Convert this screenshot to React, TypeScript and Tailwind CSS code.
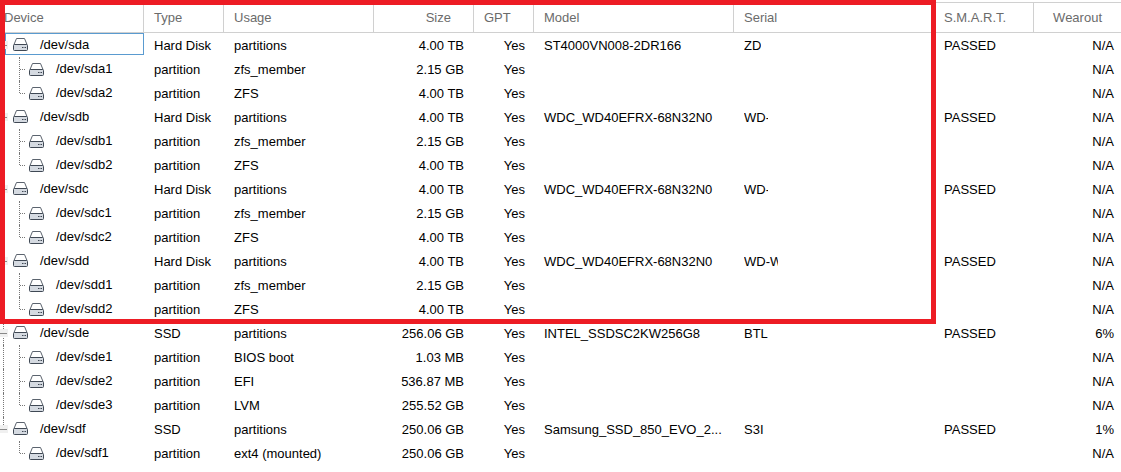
const cols = ["w-[144px]", "w-[80px]", "w-[150px]", "w-[100px]", "w-[60px]", "w-[200px]", "w-[200px]", "w-[100px]", "w-[87px]"];

type Row = { d: string; t?: string; u: string; s: string; m?: string; se?: string; clip?: string; sm?: string; w?: string; child?: boolean; last?: boolean; sel?: boolean; end?: boolean };

const disk = (d: string, t: string, s: string, m: string, se: string, clip: string, w = "N/A", sel = false, end = false): Row => ({ d, t, u: "partitions", s, m, se, clip, sm: "PASSED", w, sel, end });
const part = (d: string, u: string, s: string, last = false, end = false): Row => ({ d, t: "partition", u, s, w: "N/A", child: true, last, end });

const rows: Row[] = [
  disk("/dev/sda", "Hard Disk", "4.00 TB", "ST4000VN008-2DR166", "ZD", "w-[17px]", "N/A", true),
  part("/dev/sda1", "zfs_member", "2.15 GB"),
  part("/dev/sda2", "ZFS", "4.00 TB", true),
  disk("/dev/sdb", "Hard Disk", "4.00 TB", "WDC_WD40EFRX-68N32N0", "WD-", "w-[24px]"),
  part("/dev/sdb1", "zfs_member", "2.15 GB"),
  part("/dev/sdb2", "ZFS", "4.00 TB", true),
  disk("/dev/sdc", "Hard Disk", "4.00 TB", "WDC_WD40EFRX-68N32N0", "WD-", "w-[24px]"),
  part("/dev/sdc1", "zfs_member", "2.15 GB"),
  part("/dev/sdc2", "ZFS", "4.00 TB", true),
  disk("/dev/sdd", "Hard Disk", "4.00 TB", "WDC_WD40EFRX-68N32N0", "WD-W", "w-[34px]"),
  part("/dev/sdd1", "zfs_member", "2.15 GB"),
  part("/dev/sdd2", "ZFS", "4.00 TB", true),
  disk("/dev/sde", "SSD", "256.06 GB", "INTEL_SSDSC2KW256G8", "BTL", "w-[26px]", "6%"),
  part("/dev/sde1", "BIOS boot", "1.03 MB"),
  part("/dev/sde2", "EFI", "536.87 MB"),
  part("/dev/sde3", "LVM", "255.52 GB", true),
  disk("/dev/sdf", "SSD", "250.06 GB", "Samsung_SSD_850_EVO_2...", "S3I", "w-[20px]", "1%", false, true),
  part("/dev/sdf1", "ext4 (mounted)", "250.06 GB", true, true),
];

function Drive() {
  return (
    <svg width="15" height="13" viewBox="0 0 15 13" className="block">
      <path d="M3.5 .5h8L14 6.5H1z" fill="#fff" stroke="#5b636e" strokeWidth="1" />
      <rect x=".5" y="6.5" width="14" height="6" rx="1" fill="#d5dae1" stroke="#3f4854" strokeWidth="1" />
      <path d="M9 9.5h1.5M11.5 9.5H13" stroke="#3f4854" strokeWidth="1" />
    </svg>
  );
}

function Head({ i, label, pad }: { i: number; label: string; pad: string }) {
  return (
    <div className={`${cols[i]} shrink-0 h-full flex items-center border-r border-[#d0d0d0] last:border-r-0 ${pad}`}>
      {label}
    </div>
  );
}

function Cell({ i, children, pad }: { i: number; children?: React.ReactNode; pad: string }) {
  return <div className={`${cols[i]} shrink-0 overflow-hidden whitespace-nowrap pt-[2px] ${pad}`}>{children}</div>;
}

export default function App() {
  return (
    <div className="relative w-[1121px] h-[472px] overflow-hidden bg-white text-[13px] text-black" style={{ fontFamily: '"Liberation Sans", Arial, sans-serif' }}>
      <div className="flex h-[29px] mt-[2px] border-t border-b border-[#d0d0d0] text-[#6b6b6b] box-content">
        <Head i={0} label="Device" pad="pl-[4px]" />
        <Head i={1} label="Type" pad="pl-2.5" />
        <Head i={2} label="Usage" pad="pl-2.5" />
        <Head i={3} label="Size" pad="justify-end pr-[22px]" />
        <Head i={4} label="GPT" pad="pl-2.5" />
        <Head i={5} label="Model" pad="pl-2.5" />
        <Head i={6} label="Serial" pad="pl-2.5" />
        <Head i={7} label="S.M.A.R.T." pad="pl-2.5" />
        <Head i={8} label="Wearout" pad="justify-end pr-[19px]" />
      </div>
      {rows.map((r) => (
        <div key={r.d} className="flex h-6 items-center">
          <div className={`${cols[0]} shrink-0 relative h-full`}>
            {r.sel && <div className="absolute left-[5px] right-0 top-0 h-[22px] border border-[#5a9bd0]" />}
            {!(r.end && r.child) && (
              <div className={`absolute left-[3px] top-0 w-0 border-l border-dotted border-[#777] ${r.end ? "h-3" : "h-full"}`} />
            )}
            {r.child ? (
              <>
                <div className={`absolute left-[19px] top-0 w-0 border-l border-dotted border-[#777] ${r.last ? "h-3" : "h-full"}`} />
                <div className="absolute left-[20px] top-3 w-[5px] border-t border-dotted border-[#777]" />
                <div className="absolute left-[29px] top-[6px]"><Drive /></div>
                <span className="absolute left-[56px] top-[2px]">{r.d}</span>
              </>
            ) : (
              <>
                <div className="absolute left-0 top-[8px] w-[8px] h-[8px] bg-[#f0f0f0] flex items-center"><div className="w-[7px] h-px bg-[#888]" /></div>
                <div className="absolute left-[13px] top-[5px]"><Drive /></div>
                <span className="absolute left-[40px] top-[2px]">{r.d}</span>
              </>
            )}
          </div>
          <Cell i={1} pad="pl-2.5">{r.t}</Cell>
          <Cell i={2} pad="pl-2.5">{r.u}</Cell>
          <Cell i={3} pad="text-right pr-2.5">{r.s}</Cell>
          <Cell i={4} pad="text-right pr-[9px]">Yes</Cell>
          <Cell i={5} pad="pl-2.5">{r.m}</Cell>
          <Cell i={6} pad="pl-2.5">
            {r.se && <span className={`block overflow-hidden ${r.clip}`}>{r.se}</span>}
          </Cell>
          <Cell i={7} pad="pl-2.5">{r.sm}</Cell>
          <Cell i={8} pad="text-right pr-[7px]">{r.w}</Cell>
        </div>
      ))}
      <div className="absolute left-0 top-0 w-[936px] h-[324px] border-[5px] border-[#ed1c24] pointer-events-none" />
    </div>
  );
}
